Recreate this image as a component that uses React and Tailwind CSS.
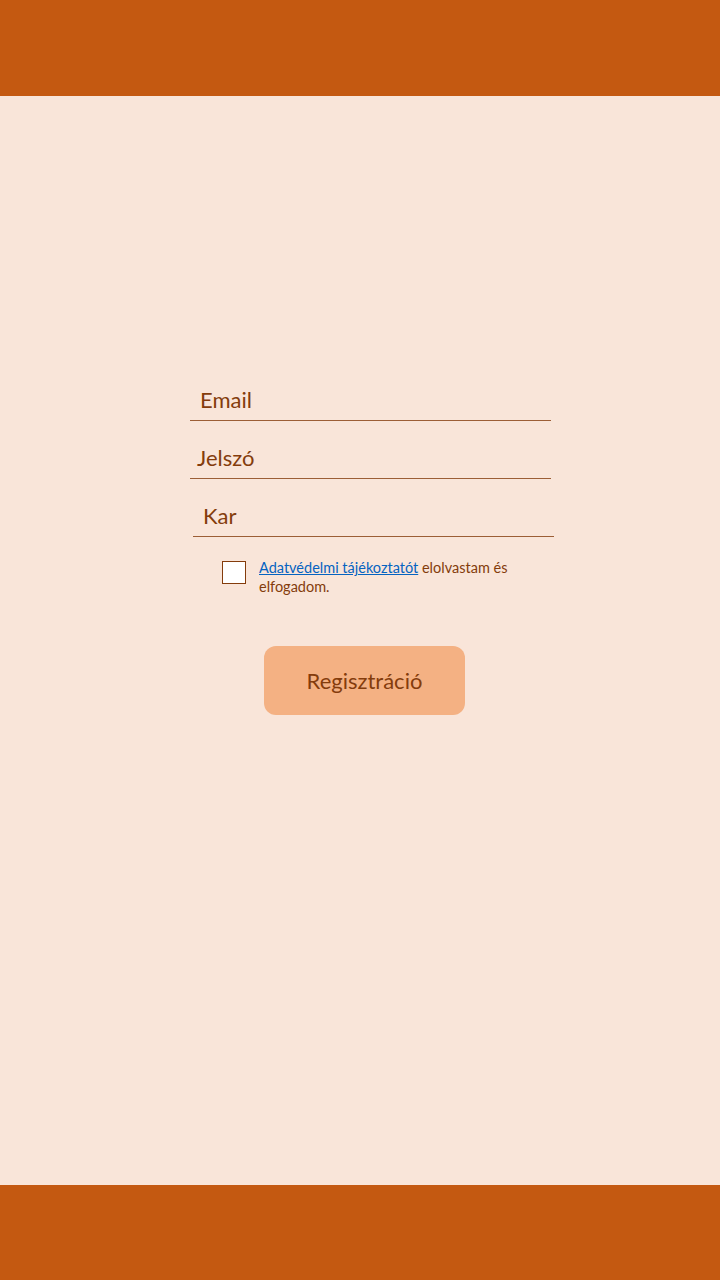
import React, { useState } from 'react';

const Field = ({ label, indent, lineInset }) => (
  <div className={`flex flex-col ${lineInset}`}>
    <span className={`text-[22px] leading-[28px] text-[#843c0c] ${indent}`}>{label}</span>
    <div className="mt-[6px] h-px w-[361px] bg-[#843c0c] opacity-80" />
  </div>
);

export default function App() {
  const [checked, setChecked] = useState(false);

  return (
    <div
      className="flex h-[1280px] w-[720px] flex-col bg-[#f9e5d9]"
      style={{ fontFamily: 'Lato, "Open Sans", sans-serif' }}
    >
      <header className="h-[96px] shrink-0 bg-[#c45911]" />

      <main className="flex flex-1 flex-col">
        <div className="mt-[290px] flex flex-col gap-[23px]">
          <Field label="Email" indent="pl-[10px]" lineInset="ml-[190px]" />
          <Field label="Jelszó" indent="pl-[7px]" lineInset="ml-[190px]" />
          <Field label="Kar" indent="pl-[10px]" lineInset="ml-[193px]" />
        </div>

        <div className="ml-[222px] mt-[21px] flex items-start gap-[13px]">
          <button
            onClick={() => setChecked(!checked)}
            className="mt-[3px] h-[23px] w-[24px] shrink-0 border border-[#843c0c] bg-white"
          />
          <p className="w-[270px] text-[14.5px] leading-[19px] text-[#843c0c]">
            <a href="#" className="text-[#0563c1] underline">Adatvédelmi tájékoztatót</a>{' '}
            <span>elolvastam és elfogadom.</span>
          </p>
        </div>

        <div className="mt-[50px] flex justify-center">
          <button className="ml-[9px] flex h-[69px] w-[201px] items-center justify-center rounded-[12px] bg-[#f4b183] text-[22px] text-[#843c0c]">
            Regisztráció
          </button>
        </div>
      </main>

      <footer className="h-[95px] shrink-0 bg-[#c45911]" />
    </div>
  );
}
